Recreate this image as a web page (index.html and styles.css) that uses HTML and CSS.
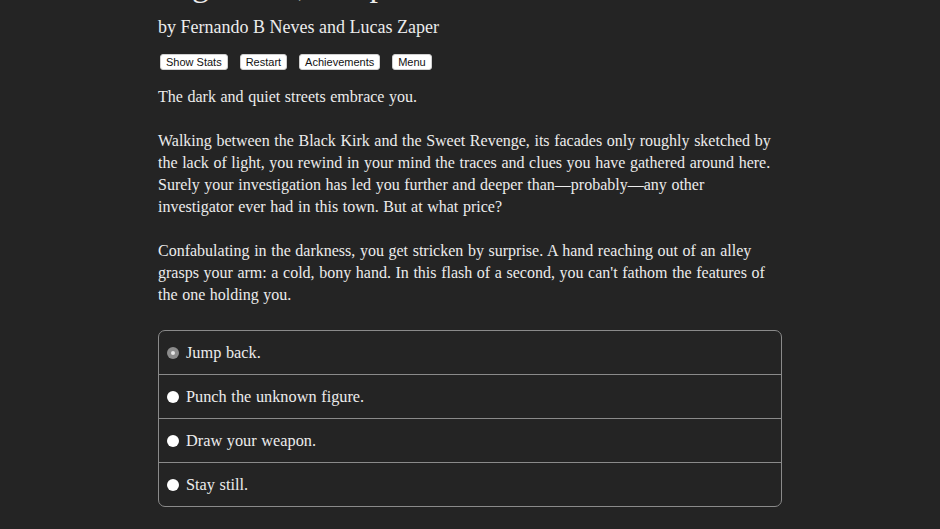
FILE: index.html
```html
<!DOCTYPE html>
<html lang="en">
<head>
<meta charset="utf-8">
<title>Highlands, Deep Waters</title>
<link rel="stylesheet" href="styles.css">
</head>
<body>
<main class="container">
  <header class="header">
    <h1 class="title">Highlands, Deep Waters</h1>
    <h2 class="author">by Fernando B Neves and Lucas Zaper</h2>
    <nav class="buttons">
      <button class="btn">Show Stats</button>
      <button class="btn">Restart</button>
      <button class="btn">Achievements</button>
      <button class="btn">Menu</button>
    </nav>
  </header>
  <section class="story">
    <p>The dark and quiet streets embrace you.</p>
    <p>Walking between the Black Kirk and the Sweet Revenge, its facades only roughly sketched by the lack of light, you rewind in your mind the traces and clues you have gathered around here. Surely your investigation has led you further and deeper than—probably—any other investigator ever had in this town. But at what price?</p>
    <p>Confabulating in the darkness, you get stricken by surprise. A hand reaching out of an alley grasps your arm: a cold, bony hand. In this flash of a second, you can't fathom the features of the one holding you.</p>
  </section>
  <form class="choices">
    <label class="choice"><span class="radio radio-active"></span><span class="choice-text">Jump back.</span></label>
    <label class="choice"><span class="radio"></span><span class="choice-text">Punch the unknown figure.</span></label>
    <label class="choice"><span class="radio"></span><span class="choice-text">Draw your weapon.</span></label>
    <label class="choice"><span class="radio"></span><span class="choice-text">Stay still.</span></label>
  </form>
</main>
</body>
</html>
```
FILE: styles.css
```css
html, body {
  margin: 0;
  padding: 0;
  background: #242424;
}
body {
  color: #ececec;
  font-family: "Liberation Serif", "Times New Roman", serif;
  font-size: 16px;
  line-height: 22px;
  word-spacing: 0.6px;
  overflow: hidden;
  height: 529px;
}
.container {
  width: 624px;
  margin: 0 auto;
}
.header {
  display: flex;
  flex-direction: column;
}
.title {
  font-size: 34px;
  font-weight: normal;
  line-height: 32px;
  margin: -31px 0 0 0;
  color: #ececec;
  word-spacing: normal;
}
.author {
  font-size: 18px;
  font-weight: normal;
  line-height: 24px;
  margin: 14px 0 0 0;
  word-spacing: normal;
}
.buttons {
  display: flex;
  gap: 12px;
  margin: 15px 0 0 2px;
}
.btn {
  font-family: "Liberation Sans", Arial, sans-serif;
  font-size: 11px;
  line-height: 14px;
  padding: 0 5px;
  background: #ffffff;
  color: #111;
  border: 1px solid #d0d0d0;
  border-radius: 3px;
  word-spacing: normal;
}
.story {
  margin-top: 16px;
}
.story p {
  margin: 0 0 22px 0;
}
.choices {
  margin-top: 24px;
  border: 1px solid #8a8a8a;
  border-radius: 7px;
  display: flex;
  flex-direction: column;
}
.choice {
  display: flex;
  align-items: center;
  height: 43px;
  padding-left: 8px;
  border-top: 1px solid #8a8a8a;
  font-size: 16.3px;
}
.choice:first-child {
  border-top: none;
}
.radio {
  width: 12px;
  height: 12px;
  border-radius: 50%;
  background: #ffffff;
  margin-right: 7px;
  flex: none;
}
.radio-active {
  background: #8c8c8c;
  position: relative;
}
.radio-active::after {
  content: "";
  position: absolute;
  left: 4px;
  top: 4px;
  width: 4px;
  height: 4px;
  border-radius: 50%;
  background: #e6e6e6;
}
```
